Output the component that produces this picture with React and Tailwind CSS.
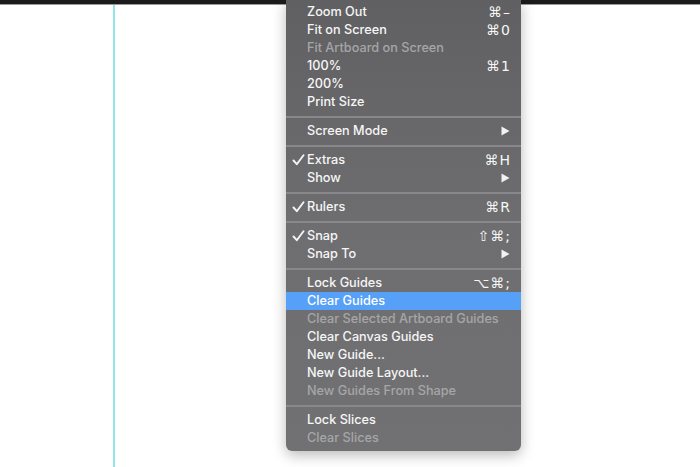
import React from "react";

const Check = () => (
  <svg width="13" height="12" viewBox="0 0 13 12" className="absolute left-[6px] top-[3px]">
    <path d="M1.5 6.5 L4.8 10.2 L11.5 1.2" fill="none" stroke="#f4f4f4" strokeWidth="1.9" strokeLinecap="round" strokeLinejoin="round" />
  </svg>
);

const Arrow = () => (
  <svg width="9" height="10" viewBox="0 0 9 10">
    <polygon points="0.5,0.5 8.5,5 0.5,9.5" fill="#f2f2f2" />
  </svg>
);

const Row = ({ label, sc, arrow, check, disabled, active }) => (
  <div
    className={
      "relative flex h-[18px] items-center pl-[21px] pr-[10px] text-[12.7px] leading-none " +
      (active ? "bg-[#56a0f8] text-white" : disabled ? "text-[#a6a6a8]" : "text-[#f6f6f6]")
    }
  >
    {check && <Check />}
    <span className="flex-1 whitespace-nowrap">{label}</span>
    {sc && (
      <span className="whitespace-nowrap text-[14px] font-normal tracking-[1px]" style={{ fontFamily: '"DejaVu Sans", "Liberation Sans", sans-serif' }}>
        {sc}
      </span>
    )}
    {arrow && <span className="mr-[1px] flex items-center"><Arrow /></span>}
  </div>
);

const Sep = () => (
  <div className="flex h-[11px] items-center">
    <div className="h-[2px] w-full bg-[#88888a]" />
  </div>
);

export default function App() {
  return (
    <div className="relative h-[467px] w-[700px] overflow-hidden bg-white" style={{ fontFamily: 'Inter, "Liberation Sans", Arial, sans-serif' }}>
      <div className="h-[5px] w-full border-b border-[#9a9a9a] bg-[#1b1b1b]" />
      <div className="absolute left-[113px] top-[5px] h-[462px] w-[2px] bg-[#8fe6ea]" />
      <div className="absolute left-[286px] top-0 w-[235px] rounded-b-[6px] bg-gradient-to-b from-[#606062] via-[#6e6e70] to-[#717173] pb-[4px] pt-[3px] shadow-[0_4px_14px_rgba(0,0,0,0.28)] font-medium">
        <Row label="Zoom Out" sc="⌘–" />
        <Row label="Fit on Screen" sc="⌘0" />
        <Row label="Fit Artboard on Screen" disabled />
        <Row label="100%" sc="⌘1" />
        <Row label="200%" />
        <Row label="Print Size" />
        <Sep />
        <Row label="Screen Mode" arrow />
        <Sep />
        <Row label="Extras" sc="⌘H" check />
        <Row label="Show" arrow />
        <Sep />
        <Row label="Rulers" sc="⌘R" check />
        <Sep />
        <Row label="Snap" sc="⇧⌘;" check />
        <Row label="Snap To" arrow />
        <Sep />
        <Row label="Lock Guides" sc="⌥⌘;" />
        <Row label="Clear Guides" active />
        <Row label="Clear Selected Artboard Guides" disabled />
        <Row label="Clear Canvas Guides" />
        <Row label="New Guide..." />
        <Row label="New Guide Layout..." />
        <Row label="New Guides From Shape" disabled />
        <Sep />
        <Row label="Lock Slices" />
        <Row label="Clear Slices" disabled />
      </div>
    </div>
  );
}
